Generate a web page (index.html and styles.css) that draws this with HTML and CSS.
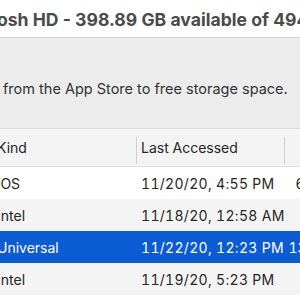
FILE: index.html
```html
<!DOCTYPE html>
<html lang="en">
<head>
    <meta charset="UTF-8">
    <title>Storage Management</title>
    <link rel="stylesheet" href="styles.css">
</head>
<body>
    <div class="window">
        <!-- 标题栏 -->
        <div class="titlebar"><span class="title">Macintosh HD - 398.89 GB available of 494.38 GB</span></div>
        <p class="hint">from the App Store to free storage space.</p>
        <!-- 列表 -->
        <div class="table">
            <div class="row head">
                <div class="cell kind">Kind</div>
                <div class="cell date">Last Accessed</div>
                <div class="cell size">Size</div>
            </div>
            <div class="row">
                <div class="cell kind">iOS</div>
                <div class="cell date">11/20/20, 4:55 PM</div>
                <div class="cell size">642 KB</div>
            </div>
            <div class="row">
                <div class="cell kind">Intel</div>
                <div class="cell date">11/18/20, 12:58 AM</div>
                <div class="cell size">12 KB</div>
            </div>
            <div class="row selected">
                <div class="cell kind">Universal</div>
                <div class="cell date">11/22/20, 12:23 PM</div>
                <div class="cell size">13.4 MB</div>
            </div>
            <div class="row">
                <div class="cell kind">Intel</div>
                <div class="cell date">11/19/20, 5:23 PM</div>
                <div class="cell size">8 KB</div>
            </div>
            <div class="row">
                <div class="cell kind"></div>
                <div class="cell date"></div>
                <div class="cell size"></div>
            </div>
        </div>
    </div>
</body>
</html>
```
FILE: styles.css
```css
*{padding:0;margin:0;box-sizing:border-box;}
body{background-color:#ececec;font-family:Inter,"Liberation Sans",sans-serif;overflow:hidden;}
.window{width:300px;height:300px;overflow:hidden;}
.titlebar{height:38px;background:#fff;border-bottom:1px solid #d6d6d6;display:flex;align-items:center;white-space:nowrap;overflow:hidden;}
.title{font-size:17.6px;font-weight:700;color:#4b4b4b;margin-left:-62px;padding-top:1px;}
.hint{margin-top:41px;padding-left:3px;font-size:14.5px;line-height:20px;color:#333;white-space:nowrap;}
.table{margin-top:29px;margin-left:-6px;width:371px;font-size:14px;color:#262626;}
.row{display:grid;grid-template-columns:143px 148px 80px;height:32px;align-items:center;white-space:nowrap;}
.row:nth-child(odd){background:#f4f4f4;}
.row:nth-child(even){background:#fff;}
.row.head{height:39px;background:#f4f4f4;border-top:1px solid #dadada;border-bottom:1px solid #e2e2e2;}
.row.head .kind,.row.head .date{height:100%;display:flex;align-items:center;background:linear-gradient(#cfcfcf,#cfcfcf) no-repeat right 0 bottom 2px/1px 27px;}
.row.selected{background:#0b5bd5;color:#fff;}
.cell{padding-left:3px;}
.date{padding-left:4px;font-variant-numeric:tabular-nums;}
.row:not(.head) .date{letter-spacing:0.3px;}
.size{text-align:right;padding-right:20px;font-variant-numeric:tabular-nums;}
.row.head .size{color:transparent;}
```
